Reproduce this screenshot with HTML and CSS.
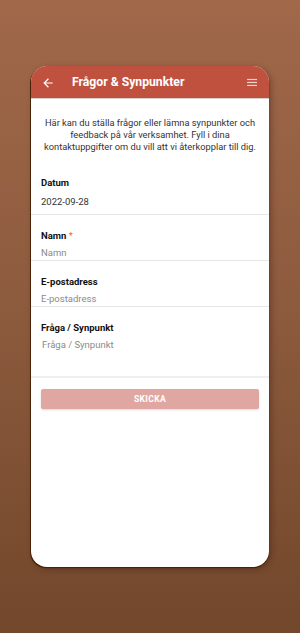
FILE: index.html
```html
<!DOCTYPE html>
<html lang="sv">
<head>
<meta charset="utf-8">
<link rel="stylesheet" href="styles.css">
</head>
<body>
<div class="screen">
  <div class="card">
    <header class="bar">
      <svg class="icon back" viewBox="0 0 24 24" width="14" height="14"><path d="M20 11H7.83l5.59-5.59L12 4l-8 8 8 8 1.41-1.41L7.83 13H20v-2z" fill="#fff"/></svg>
      <h1 class="title">Frågor &amp; Synpunkter</h1>
      <svg class="icon menu" viewBox="0 0 12 10" width="11" height="9"><rect x="0" y="1" width="11" height="1.3" fill="#f3d2cc"/><rect x="0" y="4.3" width="11" height="1.3" fill="#f3d2cc"/><rect x="0" y="7.6" width="11" height="1.3" fill="#f3d2cc"/></svg>
    </header>
    <p class="intro">Här kan du ställa frågor eller lämna synpunkter och feedback på vår verksamhet. Fyll i dina kontaktuppgifter om du vill att vi återkopplar till dig.</p>
    <div class="field first">
      <div class="label">Datum</div>
      <div class="value">2022-09-28</div>
    </div>
    <div class="field">
      <div class="label">Namn <span class="req">*</span></div>
      <div class="ph">Namn</div>
    </div>
    <div class="field">
      <div class="label">E-postadress</div>
      <div class="ph">E-postadress</div>
    </div>
    <div class="field tall">
      <div class="label">Fråga / Synpunkt</div>
      <div class="ph ind">Fråga / Synpunkt</div>
    </div>
    <div class="actions">
      <button class="btn">SKICKA</button>
    </div>
  </div>
</div>
</body>
</html>
```
FILE: styles.css
```css
* { box-sizing: border-box; }
html, body { margin: 0; padding: 0; }
body {
  width: 300px;
  height: 633px;
  background: linear-gradient(180deg, #a1684a 0%, #8c5a3d 50%, #72472b 100%);
  font-family: Roboto, "Liberation Sans", sans-serif;
  overflow: hidden;
}
.screen {
  padding: 66px 31px 0 31px;
}
.card {
  width: 238px;
  height: 501px;
  background: #fff;
  border-radius: 16px;
  overflow: hidden;
  box-shadow: -1px 1px 0 #4a2208, 0 1px 1px #3c1a04, 2px 2px 6px rgba(40,15,0,0.35);
}
.bar {
  height: 33px;
  background: #c0513f;
  display: flex;
  align-items: center;
  padding: 0 11px 0 10px;
  border-bottom: 1px solid #d6cfcc;
}
.back { flex: none; margin-top: 1px; }
.title {
  flex: 1;
  margin: 0 0 0 17px;
  font-size: 12.2px;
  font-weight: 700;
  color: #fff;
  line-height: 1;
}
.menu { flex: none; }
.intro {
  margin: 0;
  padding: 18px 4px 9px;
  text-align: center;
  font-size: 9.3px;
  line-height: 12px;
  color: #333;
}
.field {
  padding: 0 10px 0 10px;
  height: 46px;
  border-bottom: 1px solid #e6e6e6;
  display: flex;
  flex-direction: column;
}
.field.first { height: 53px; }
.label {
  font-size: 9.5px;
  font-weight: 700;
  color: #111;
  line-height: 12px;
  padding-top: 15px;
}
.req { color: #e0675a; font-weight: 400; }
.value {
  font-size: 9.5px;
  color: #333;
  line-height: 12px;
  margin-top: 7px;
}
.ph {
  font-size: 9.5px;
  color: #8a8a8a;
  line-height: 12px;
  margin-top: 5px;
}
.ph.ind { padding-left: 1px; }
.tall { height: 71px; border-bottom: 2px solid #efefef; }
.actions {
  padding: 11px 10px 0 10px;
}
.btn {
  display: block;
  width: 100%;
  height: 20px;
  border: none;
  border-radius: 2px;
  background: #e0a7a2;
  color: #fff;
  font-family: Roboto, "Liberation Sans", sans-serif;
  font-weight: 700;
  font-size: 8.5px;
  letter-spacing: 0.4px;
  box-shadow: 0 1px 2px rgba(0,0,0,0.15);
  padding: 0;
}
```
